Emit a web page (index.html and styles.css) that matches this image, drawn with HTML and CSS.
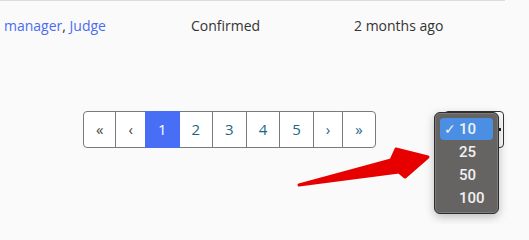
FILE: index.html
```html
<!DOCTYPE html>
<html>
<head>
<meta charset="utf-8">
<link rel="stylesheet" href="styles.css">
</head>
<body>
<div class="page">
  <div class="row">
    <div class="cell"><a class="link" href="#">manager</a>, <a class="link" href="#">Judge</a></div>
    <div class="cell">Confirmed</div>
    <div class="cell">2 months ago</div>
  </div>
  <div class="footer">
    <nav class="pager">
      <a class="pg muted" href="#">«</a>
      <a class="pg muted" href="#">‹</a>
      <a class="pg active" href="#">1</a>
      <a class="pg" href="#">2</a>
      <a class="pg" href="#">3</a>
      <a class="pg" href="#">4</a>
      <a class="pg" href="#">5</a>
      <a class="pg" href="#">›</a>
      <a class="pg" href="#">»</a>
    </nav>
    <div class="select-wrap">
      <div class="select"><span class="caret"></span></div>
      <ul class="menu">
        <li class="opt selected"><span class="check">✓</span>10</li>
        <li class="opt">25</li>
        <li class="opt">50</li>
        <li class="opt">100</li>
      </ul>
    </div>
  </div>
  <svg class="arrow" width="529" height="224" viewBox="0 0 529 224">
    <path d="M299 185 L391 160 L396 149 L428 157 L405 177 L399 172 Z" fill="#e60000" stroke="#e60000" stroke-width="3" stroke-linejoin="round"/>
  </svg>
</div>
</body>
</html>
```
FILE: styles.css
```css
html, body {
  margin: 0;
  padding: 0;
  background: #fafafa;
  height: 224px;
  overflow: hidden;
}
.page {
  position: relative;
  width: 529px;
  height: 224px;
  overflow: hidden;
  font-family: "Open Sans", "Liberation Sans", sans-serif;
}
.row {
  width: 505px;
  border-top: 1px solid #dcdcdc;
  display: grid;
  grid-template-columns: 187px 163px 1fr;
  padding: 15px 0 0 4px;
  box-sizing: border-box;
  font-size: 14px;
  line-height: 20px;
  color: #333;
}
.link {
  color: #4a6cf2;
  text-decoration: none;
}
.footer {
  display: flex;
  align-items: flex-start;
  margin-top: 75px;
  padding-left: 83px;
  width: 504px;
  box-sizing: border-box;
}
.pager {
  display: flex;
}
.pg {
  display: block;
  height: 35px;
  line-height: 35px;
  padding: 0 12px;
  border: 1px solid #7a7a7a;
  margin-left: -1px;
  background: #fff;
  color: #1d6682;
  text-decoration: none;
  font-size: 15px;
}
.pg:first-child {
  margin-left: 0;
  border-radius: 4px 0 0 4px;
}
.pg:last-child {
  border-radius: 0 4px 4px 0;
}
.pg.muted {
  color: #444;
}
.pg.active {
  background: #496ef6;
  border-color: #496ef6;
  color: #fff;
  position: relative;
}
.select-wrap {
  margin-left: auto;
  position: relative;
  width: 60px;
  height: 37px;
}
.select {
  box-sizing: border-box;
  width: 60px;
  height: 37px;
  border: 1px solid #333;
  border-radius: 4px;
  background: #fff;
  position: relative;
}
.caret {
  position: absolute;
  right: 2px;
  top: 16px;
  width: 3px;
  height: 3px;
  background: #222;
}
.menu {
  position: absolute;
  left: -10px;
  top: 1px;
  width: 65px;
  height: 102px;
  box-sizing: border-box;
  margin: 0;
  padding: 5px 5px 0 5px;
  list-style: none;
  background: #666463;
  border: 1px solid #2e2e2e;
  border-radius: 6px;
  box-shadow: 0 3px 10px rgba(0,0,0,0.25), inset 0 0 0 1px #7d7b7a;
  font-family: Roboto, "Liberation Sans", sans-serif;
  font-weight: 500;
  font-size: 15px;
  color: #f2f2f2;
}
.opt {
  height: 23px;
  line-height: 23px;
  padding-left: 19px;
  border-radius: 4px;
  position: relative;
}
.opt.selected {
  background: #4a8fe3;
  height: 22px;
  line-height: 22px;
  margin-bottom: 1px;
}
.check {
  position: absolute;
  left: 4px;
  top: 0;
  font-family: "DejaVu Sans", sans-serif;
  font-weight: normal;
  font-size: 14px;
}
.arrow {
  position: absolute;
  left: 0;
  top: 0;
  pointer-events: none;
}
```
